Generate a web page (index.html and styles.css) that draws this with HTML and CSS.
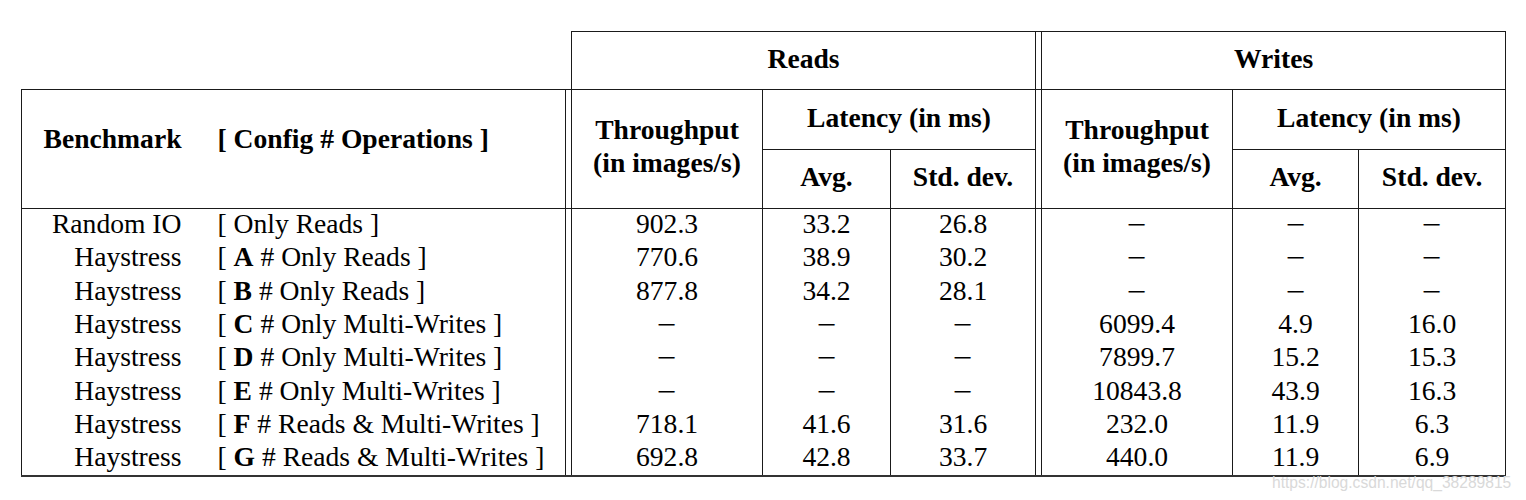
FILE: index.html
```html
<!DOCTYPE html>
<html lang="en">
<head>
    <meta charset="UTF-8">
    <title>Haystress Benchmark Results</title>
    <link rel="stylesheet" href="styles.css">
</head>
<body>
    <table class="results">
        <colgroup>
            <col class="c-bench">
            <col class="c-config">
            <col class="c-gap">
            <col class="c-tput">
            <col class="c-avg">
            <col class="c-std">
            <col class="c-gap">
            <col class="c-tput">
            <col class="c-avg-w">
            <col class="c-std-w">
        </colgroup>
        <thead>
            <tr class="row-group">
                <th colspan="3" class="blank"></th>
                <th colspan="3" class="boxed">Reads</th>
                <td class="gap top"></td>
                <th colspan="3" class="boxed">Writes</th>
            </tr>
            <tr class="row-sub">
                <th rowspan="2" class="bench head-left">Benchmark</th>
                <th rowspan="2" class="config head-left">[ Config # Operations ]</th>
                <td rowspan="2" class="gap top"></td>
                <th rowspan="2" class="boxed tput">Throughput<br>(in images/s)</th>
                <th colspan="2" class="boxed">Latency (in ms)</th>
                <td rowspan="2" class="gap top"></td>
                <th rowspan="2" class="boxed tput">Throughput<br>(in images/s)</th>
                <th colspan="2" class="boxed">Latency (in ms)</th>
            </tr>
            <tr class="row-stat">
                <th class="boxed">Avg.</th>
                <th class="boxed">Std. dev.</th>
                <th class="boxed">Avg.</th>
                <th class="boxed">Std. dev.</th>
            </tr>
        </thead>
        <tbody>
            <tr>
                <td class="bench">Random IO</td>
                <td class="config">[ Only Reads ]</td>
                <td class="gap"></td>
                <td>902.3</td><td>33.2</td><td>26.8</td>
                <td class="gap"></td>
                <td><span class="dash">&minus;</span></td><td><span class="dash">&minus;</span></td><td><span class="dash">&minus;</span></td>
            </tr>
            <tr>
                <td class="bench">Haystress</td>
                <td class="config">[ <b>A</b> # Only Reads ]</td>
                <td class="gap"></td>
                <td>770.6</td><td>38.9</td><td>30.2</td>
                <td class="gap"></td>
                <td><span class="dash">&minus;</span></td><td><span class="dash">&minus;</span></td><td><span class="dash">&minus;</span></td>
            </tr>
            <tr>
                <td class="bench">Haystress</td>
                <td class="config">[ <b>B</b> # Only Reads ]</td>
                <td class="gap"></td>
                <td>877.8</td><td>34.2</td><td>28.1</td>
                <td class="gap"></td>
                <td><span class="dash">&minus;</span></td><td><span class="dash">&minus;</span></td><td><span class="dash">&minus;</span></td>
            </tr>
            <tr>
                <td class="bench">Haystress</td>
                <td class="config">[ <b>C</b> # Only Multi-Writes ]</td>
                <td class="gap"></td>
                <td><span class="dash">&minus;</span></td><td><span class="dash">&minus;</span></td><td><span class="dash">&minus;</span></td>
                <td class="gap"></td>
                <td>6099.4</td><td>4.9</td><td>16.0</td>
            </tr>
            <tr>
                <td class="bench">Haystress</td>
                <td class="config">[ <b>D</b> # Only Multi-Writes ]</td>
                <td class="gap"></td>
                <td><span class="dash">&minus;</span></td><td><span class="dash">&minus;</span></td><td><span class="dash">&minus;</span></td>
                <td class="gap"></td>
                <td>7899.7</td><td>15.2</td><td>15.3</td>
            </tr>
            <tr>
                <td class="bench">Haystress</td>
                <td class="config">[ <b>E</b> # Only Multi-Writes ]</td>
                <td class="gap"></td>
                <td><span class="dash">&minus;</span></td><td><span class="dash">&minus;</span></td><td><span class="dash">&minus;</span></td>
                <td class="gap"></td>
                <td>10843.8</td><td>43.9</td><td>16.3</td>
            </tr>
            <tr>
                <td class="bench">Haystress</td>
                <td class="config">[ <b>F</b> # Reads &amp; Multi-Writes ]</td>
                <td class="gap"></td>
                <td>718.1</td><td>41.6</td><td>31.6</td>
                <td class="gap"></td>
                <td>232.0</td><td>11.9</td><td>6.3</td>
            </tr>
            <tr>
                <td class="bench">Haystress</td>
                <td class="config">[ <b>G</b> # Reads &amp; Multi-Writes ]</td>
                <td class="gap"></td>
                <td>692.8</td><td>42.8</td><td>33.7</td>
                <td class="gap"></td>
                <td>440.0</td><td>11.9</td><td>6.9</td>
            </tr>
        </tbody>
    </table>
    <span class="watermark">https://blog.csdn.net/qq_38289815</span>
</body>
</html>
```

FILE: styles.css
```css
/* General Styling */
body { margin: 0; background-color: #fff; color: #000; font-family: "Liberation Serif", "Times New Roman", serif; }

/* Table Styling */
.results {
    table-layout: fixed;
    border-collapse: collapse;
    width: 1485px;
    margin: 31px 0 0 21px;
    font-size: 27.6px;
}
.c-bench { width: 177px; }
.c-config { width: 367px; }
.c-gap { width: 6px; }
.c-tput { width: 191px; }
.c-avg { width: 128px; }
.c-std { width: 145px; }
.c-avg-w { width: 126px; }
.c-std-w { width: 147px; }

th, td { padding: 0; text-align: center; white-space: nowrap; }
th { font-weight: bold; }
thead th, thead td { border: 1px solid #1a1a1a; }
thead th.blank { border: none; border-bottom: 1px solid #1a1a1a; }

/* Header rows */
.row-group { height: 58px; }
.row-group th { padding-bottom: 4px; }
.row-sub { height: 60px; }
.row-sub th { padding-bottom: 3px; }
.row-stat { height: 59px; }
.row-stat th { padding-bottom: 5px; }
.row-sub th.head-left { padding-bottom: 20px; }
th.bench { border-right: none; text-align: right; padding-right: 17px; }
th.config { border-left: none; text-align: left; padding-left: 19px; }
.row-sub th.tput { line-height: 33px; padding-bottom: 6px; }

/* Body rows */
tbody tr { height: 33.4px; }
tbody td { line-height: 29px; padding-bottom: 4px; border-left: 1px solid #1a1a1a; border-right: 1px solid #1a1a1a; }
tbody tr:last-child td { border-bottom: 2px solid #333; }
td.bench { text-align: right; padding-right: 17px; border-right: none; }
td.config { text-align: left; padding-left: 19px; border-left: none; }
td.gap { padding: 0; }
.dash { display: inline-block; transform: scaleX(1.25) translateY(1px); }
b { font-weight: bold; }

/* Watermark over the bottom-right corner */
.watermark {
    position: absolute;
    top: 474px;
    left: 1272px;
    font-family: "Liberation Sans", Arial, sans-serif;
    font-size: 15.6px;
    line-height: 18px;
    color: #d9d9d9;
    white-space: nowrap;
}
```
